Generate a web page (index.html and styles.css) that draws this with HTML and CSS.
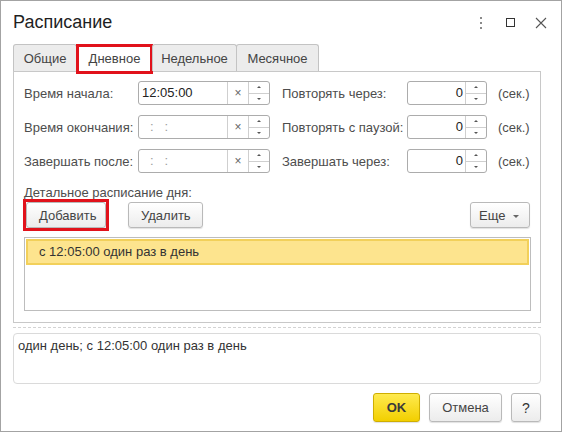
FILE: index.html
```html
<!DOCTYPE html>
<html lang="ru">
  <head>
    <title>Расписание</title>
    <meta charset="UTF-8">
    <meta name="viewport" content="width=device-width, initial-scale=1.0">
    <link rel="stylesheet" href="styles.css">
  </head>
  <body>
    <div class="window">
      <div class="header">
        <span class="title">Расписание</span>
        <div class="controls">
          <svg class="ctl" width="22" height="22" viewBox="0 0 22 22">
            <rect x="10" y="5" width="2" height="2" fill="#8a8a8a"/>
            <rect x="10" y="10" width="2" height="2" fill="#8a8a8a"/>
            <rect x="10" y="15" width="2" height="2" fill="#8a8a8a"/>
          </svg>
          <svg class="ctl" width="22" height="22" viewBox="0 0 22 22">
            <rect x="6.5" y="6.5" width="8" height="8" fill="none" stroke="#333" stroke-width="1"/>
          </svg>
          <svg class="ctl" width="22" height="22" viewBox="0 0 22 22">
            <path d="M6 6 L16 16 M16 6 L6 16" stroke="#555" stroke-width="1.1"/>
          </svg>
        </div>
      </div>

      <div class="body">
        <div class="tabs">
          <div class="tab t1">Общие</div>
          <div class="tab t2 active marked">Дневное</div>
          <div class="tab t3">Недельное</div>
          <div class="tab t4">Месячное</div>
        </div>

        <div class="panel">
          <div class="form">
            <span class="label">Время начала:</span>
            <div class="field">
              <span class="val">12:05:00</span>
              <span class="clear">×</span>
              <span class="spin"><i class="up"></i><i class="down"></i></span>
            </div>
            <span class="label rlabel">Повторять через:</span>
            <div class="field">
              <span class="val num">0</span>
              <span class="spin"><i class="up"></i><i class="down"></i></span>
            </div>
            <span class="label unit">(сек.)</span>

            <span class="label">Время окончания:</span>
            <div class="field">
              <span class="val empty">:&nbsp;&nbsp;&nbsp;:</span>
              <span class="clear">×</span>
              <span class="spin"><i class="up"></i><i class="down"></i></span>
            </div>
            <span class="label rlabel">Повторять с паузой:</span>
            <div class="field">
              <span class="val num">0</span>
              <span class="spin"><i class="up"></i><i class="down"></i></span>
            </div>
            <span class="label unit">(сек.)</span>

            <span class="label">Завершать после:</span>
            <div class="field">
              <span class="val empty">:&nbsp;&nbsp;&nbsp;:</span>
              <span class="clear">×</span>
              <span class="spin"><i class="up"></i><i class="down"></i></span>
            </div>
            <span class="label rlabel">Завершать через:</span>
            <div class="field">
              <span class="val num">0</span>
              <span class="spin"><i class="up"></i><i class="down"></i></span>
            </div>
            <span class="label unit">(сек.)</span>
          </div>

          <div class="caption">Детальное расписание дня:</div>
          <div class="toolbar">
            <button class="btn add marked">Добавить</button>
            <button class="btn del">Удалить</button>
            <button class="btn more">Еще <span class="caret"></span></button>
          </div>

          <div class="table">
            <div class="row selected">с 12:05:00 один раз в день</div>
          </div>
        </div>

        <div class="sep"></div>
        <div class="summary">один день; с 12:05:00 один раз в день</div>

        <div class="footer">
          <button class="btn ok">OK</button>
          <button class="btn cancel">Отмена</button>
          <button class="btn help">?</button>
        </div>
      </div>
    </div>
  </body>
</html>
```

FILE: styles.css
```css
body {
  margin: 0;
  background: white;
  font-family: "Liberation Sans", Arial, sans-serif;
  font-size: 13px;
  color: #4d4d4d;
}

.window {
  width: 562px;
  height: 432px;
  box-sizing: border-box;
  border: 1px solid #a3a3a3;
  background: white;
}

.header {
  height: 43px;
  display: flex;
  align-items: center;
  padding-left: 12px;
  padding-right: 9px;
}

.title {
  font-size: 18px;
  color: #1f1f1f;
  flex: 1;
}

.controls {
  display: flex;
  gap: 8px;
  margin-top: 1px;
}

.ctl {
  display: block;
}

.body {
  padding: 0 20px 0 12px;
}

/* tabs */
.tabs {
  display: flex;
  height: 27px;
  position: relative;
  z-index: 1;
}

.tab {
  position: relative;
  box-sizing: border-box;
  background: #ececec;
  border: 1px solid #c3c3c3;
  border-bottom: none;
  border-radius: 3px 3px 0 0;
  text-align: center;
  line-height: 27px;
  color: #444;
  margin-right: -1px;
}

.t1 { width: 64px; }
.t2 { width: 77px; }
.t3 { width: 85px; }
.t4 { width: 83px; }

.tab.active {
  background: white;
  height: 28px;
}

.marked::after {
  content: '';
  position: absolute;
  top: -1px;
  left: -1px;
  right: -1px;
  bottom: -2px;
  border: 3px solid #e1121b;
}

.panel {
  border: 1px solid #c8c8c8;
  padding: 9px 9px 9px 10px;
  height: 232px;
}

/* form */
.form {
  display: grid;
  grid-template-columns: 114px 132px 137px 80px auto;
  grid-auto-rows: 24px;
  row-gap: 10px;
  align-items: center;
}

.label {
  white-space: nowrap;
}

.rlabel {
  padding-left: 12px;
}

.unit {
  padding-left: 11px;
}

.field {
  display: flex;
  height: 24px;
  box-sizing: border-box;
  border: 1px solid #acacac;
  border-radius: 3px;
  background: white;
}

.val {
  flex: 1;
  line-height: 22px;
  padding-left: 3px;
  color: #222;
}

.val.empty {
  color: #9c9c9c;
  padding-left: 11px;
}

.val.num {
  text-align: right;
  padding-right: 2px;
}

.clear {
  width: 20px;
  border-left: 1px solid #cfcfcf;
  text-align: center;
  line-height: 22px;
  font-size: 12px;
  color: #666;
}

.spin {
  width: 20px;
  border-left: 1px solid #cfcfcf;
  display: flex;
  flex-direction: column;
}

.spin i {
  flex: 1;
  display: flex;
  align-items: center;
  justify-content: center;
}

.spin .up {
  border-bottom: 1px solid #cfcfcf;
}

.spin i::before {
  content: '';
  border-left: 2px solid transparent;
  border-right: 2px solid transparent;
}

.spin .up::before {
  border-bottom: 2px solid #555;
}

.spin .down::before {
  border-top: 2px solid #555;
}

/* detail list */
.caption {
  margin-top: 12px;
  line-height: 16px;
}

.toolbar {
  display: flex;
  margin-top: 1px;
  padding-right: 1px;
}

.btn {
  position: relative;
  font-family: "Liberation Sans", Arial, sans-serif;
  font-size: 13px;
  color: #444;
  height: 26px;
  padding: 0 12px;
  background: linear-gradient(#ffffff, #ececec);
  border: 1px solid #b9b9b9;
  border-radius: 3px;
  box-shadow: 0 1px 1px rgba(0, 0, 0, 0.12);
}

.add {
  margin-left: 2px;
  width: 80px;
}

.add.marked::after {
  top: -4px;
  left: -4px;
  right: -4px;
  bottom: -4px;
}

.del {
  margin-left: 22px;
  width: 75px;
}

.more {
  margin-left: auto;
  width: 60px;
  padding: 0 8px;
  text-align: left;
}

.caret {
  display: inline-block;
  margin-left: 4px;
  vertical-align: middle;
  border-left: 3px solid transparent;
  border-right: 3px solid transparent;
  border-top: 3px solid #666;
}

.table {
  margin-top: 9px;
  height: 74px;
  box-sizing: border-box;
  border: 1px solid #bdbdbd;
  padding: 1px;
}

.row {
  height: 26px;
  line-height: 22px;
  box-sizing: border-box;
  padding-left: 11px;
  color: #333;
}

.row.selected {
  background: #fde48e;
  border: 2px solid #f2d05a;
}

/* bottom */
.sep {
  margin-top: 4px;
  border-top: 1px dashed #d3d3d3;
}

.summary {
  margin-top: 5px;
  height: 51px;
  box-sizing: border-box;
  border: 1px solid #dadada;
  border-radius: 4px;
  padding: 4px 4px;
  color: #333;
}

.footer {
  display: flex;
  justify-content: flex-end;
  gap: 9px;
  margin-top: 9px;
}

.footer .btn {
  height: 29px;
}

.ok {
  width: 47px;
  font-weight: bold;
  color: #3a3a3a;
  background: linear-gradient(#ffea4f, #f2cf00);
  border-color: #cfae00;
}

.cancel {
  width: 73px;
}

.help {
  width: 30px;
  padding: 0;
  font-size: 14px;
  color: #333;
}
```
